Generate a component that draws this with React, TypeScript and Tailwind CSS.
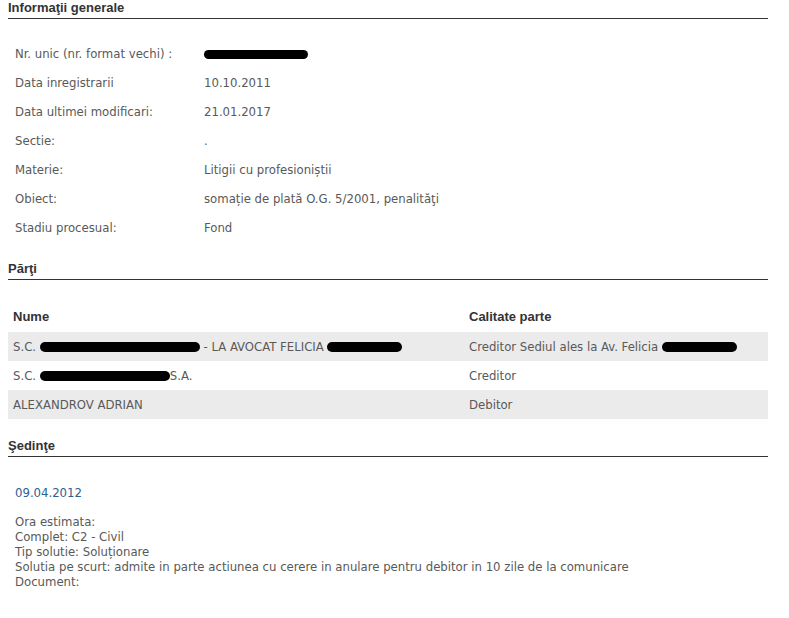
import React from "react";

const body = { fontFamily: '"DejaVu Sans Condensed", "DejaVu Sans", sans-serif' };
const head = { fontFamily: '"Liberation Sans", Arial, sans-serif' };

function Blob({ w, h = 9, className = "" }: { w: number; h?: number; className?: string }) {
  return (
    <span
      className={"inline-block rounded-full bg-black align-middle " + className}
      style={{ width: w, height: h }}
    />
  );
}

function Heading({ children, className = "" }: { children: React.ReactNode; className?: string }) {
  return (
    <div
      className={"h-[19px] border-b border-[#333] text-[13px] leading-[15px] font-bold text-[#333] " + className}
      style={head}
    >
      {children}
    </div>
  );
}

const info: [string, React.ReactNode][] = [
  ["Nr. unic (nr. format vechi) :", <Blob w={104} h={9} />],
  ["Data inregistrarii", "10.10.2011"],
  ["Data ultimei modificari:", "21.01.2017"],
  ["Sectie:", "."],
  ["Materie:", "Litigii cu profesioniștii"],
  ["Obiect:", "somație de plată O.G. 5/2001, penalităţi"],
  ["Stadiu procesual:", "Fond"],
];

export default function App() {
  return (
    <div className="w-[789px] h-[618px] bg-white pl-2 pr-[21px] text-[13px] text-[#595959]" style={body}>
      <Heading>Informaţii generale</Heading>
      <div className="mt-[20px] flex flex-col">
        {info.map(([k, v], i) => (
          <div key={i} className="h-[29px] flex items-center pl-[7px]">
            <div className="w-[189px]">{k}</div>
            <div>{v}</div>
          </div>
        ))}
      </div>

      <Heading className="mt-[19px]">Părţi</Heading>
      <div className="mt-[21px]">
        <div className="h-[31px] flex items-center pl-[5px] font-bold text-[#333]" style={head}>
          <div className="w-[456px]">Nume</div>
          <div>Calitate parte</div>
        </div>
        <div className="h-[29px] flex items-center pl-[5px] bg-[#ebebeb]">
          <div className="w-[456px] flex items-center">
            S.C.&nbsp;<Blob w={160} h={10} />&nbsp;- LA AVOCAT FELICIA&nbsp;<Blob w={75} h={10} />
          </div>
          <div className="flex items-center">
            Creditor Sediul ales la Av. Felicia&nbsp;<Blob w={75} h={10} />
          </div>
        </div>
        <div className="h-[29px] flex items-center pl-[5px]">
          <div className="w-[456px] flex items-center">
            S.C.&nbsp;<Blob w={130} h={10} />S.A.
          </div>
          <div>Creditor</div>
        </div>
        <div className="h-[29px] flex items-center pl-[5px] bg-[#ebebeb]">
          <div className="w-[456px]">ALEXANDROV ADRIAN</div>
          <div>Debitor</div>
        </div>
      </div>

      <Heading className="mt-[19px]">Şedinţe</Heading>
      <div className="pl-[7px] leading-[15px]">
        <div className="mt-[28px] text-[#2a6191]">09.04.2012</div>
        <div className="mt-[14px]">
          <div>Ora estimata:</div>
          <div>Complet: C2 - Civil</div>
          <div>Tip solutie: Soluționare</div>
          <div>Solutia pe scurt: admite in parte actiunea cu cerere in anulare pentru debitor in 10 zile de la comunicare</div>
          <div>Document:</div>
        </div>
      </div>
    </div>
  );
}
